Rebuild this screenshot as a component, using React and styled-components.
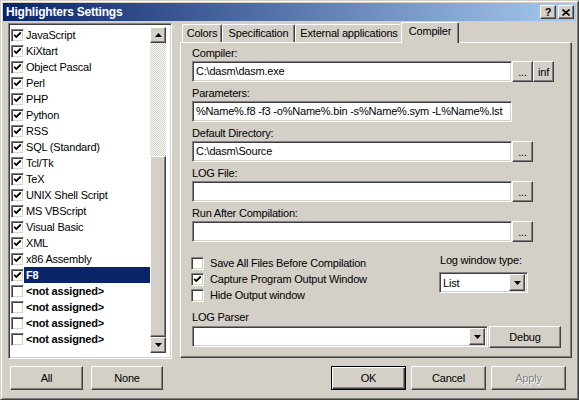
import React from 'react';
import styled, { createGlobalStyle, css } from 'styled-components';

const GlobalStyle = createGlobalStyle`
  body {
    margin: 0;
    background: #d4d0c8;
    font-family: "Liberation Sans", Arial, sans-serif;
    font-size: 11px;
    letter-spacing: -0.2px;
    color: #000;
  }
  * { box-sizing: border-box; }
`;

const raised = css`
  background: #d4d0c8;
  border: 1px solid;
  border-color: #fff #404040 #404040 #fff;
  box-shadow: inset -1px -1px #808080;
`;

const sunken = css`
  background: #fff;
  border: 1px solid;
  border-color: #808080 #fff #fff #808080;
  box-shadow: inset 1px 1px #404040, inset -1px -1px #d4d0c8;
`;

const Window = styled.div`
  width: 579px;
  height: 400px;
  padding: 2px;
  background: #d4d0c8;
  border: 1px solid;
  border-color: #d4d0c8 #404040 #404040 #d4d0c8;
  box-shadow: inset 1px 1px #fff, inset -1px -1px #808080;
  display: flex;
  flex-direction: column;
`;

const TitleBar = styled.div`
  height: 18px;
  display: flex;
  align-items: center;
  justify-content: space-between;
  padding: 0 2px 0 2px;
  background: linear-gradient(90deg, #0a246a, #a6caf0);
`;

const Title = styled.span`
  color: #fff;
  font-weight: bold;
  font-size: 12px;
  padding-left: 1px;
`;

const TitleButtons = styled.div`
  display: flex;
  gap: 2px;
`;

const TitleButton = styled.div`
  ${raised};
  width: 16px;
  height: 14px;
  display: flex;
  align-items: center;
  justify-content: center;
  font-weight: bold;
  font-size: 11px;
  line-height: 12px;
`;

const Body = styled.div`
  display: flex;
  margin-top: 1px;
  padding-left: 5px;
`;

const LeftPane = styled.div`
  width: 164px;
  margin-top: 1px;
  display: flex;
  flex-direction: column;
`;

const ListBox = styled.div`
  ${sunken};
  height: 336px;
  padding: 3px 5px 5px 1px;
  display: flex;
`;

const Items = styled.div`
  flex: 1;
  display: flex;
  flex-direction: column;
`;

const Item = styled.div`
  height: 16px;
  display: flex;
  align-items: center;
  padding-left: 1px;
`;

const Box = styled.span`
  ${sunken};
  width: 13px;
  height: 13px;
  flex: none;
  display: flex;
  align-items: center;
  justify-content: center;
`;

const ItemLabel = styled.span`
  flex: 1;
  height: 16px;
  line-height: 16px;
  padding-left: 2px;
  white-space: nowrap;
  font-weight: ${p => (p.$bold ? 'bold' : 'normal')};
  background: ${p => (p.$selected ? '#0a246a' : 'transparent')};
  color: ${p => (p.$selected ? '#fff' : '#000')};
`;

const ScrollBar = styled.div`
  width: 16px;
  display: flex;
  flex-direction: column;
`;

const ScrollButton = styled.div`
  ${raised};
  height: 16px;
  display: flex;
  align-items: center;
  justify-content: center;
`;

const Track = styled.div`
  flex: 1;
  display: flex;
  flex-direction: column;
  justify-content: flex-end;
  background-color: #fff;
  background-image: repeating-conic-gradient(#d4d0c8 0 25%, #fff 0 50%);
  background-size: 2px 2px;
`;

const Thumb = styled.div`
  ${raised};
  height: 181px;
`;

const ListButtons = styled.div`
  display: flex;
  gap: 8px;
  margin-top: 7px;
  padding-left: 2px;
`;

const Button = styled.div`
  ${raised};
  width: ${p => p.$w || 75}px;
  height: ${p => p.$h || 24}px;
  display: flex;
  align-items: center;
  justify-content: center;
  color: ${p => (p.$disabled ? '#808080' : '#000')};
  text-shadow: ${p => (p.$disabled ? '1px 1px #fff' : 'none')};
  ${p =>
    p.$default &&
    css`
      border: 1px solid #000;
      box-shadow: inset 1px 1px #fff, inset -1px -1px #404040, inset -2px -2px #808080;
    `}
`;

const RightPane = styled.div`
  width: 392px;
  margin-left: 8px;
  display: flex;
  flex-direction: column;
`;

const TabRow = styled.div`
  height: 20px;
  display: flex;
  align-items: flex-end;
  padding-left: 2px;
`;

const Tab = styled.div`
  position: relative;
  width: ${p => p.$w}px;
  height: 18px;
  display: flex;
  justify-content: center;
  padding-top: 2px;
  background: #d4d0c8;
  border-top: 1px solid #fff;
  border-left: 1px solid #fff;
  border-right: 1px solid #404040;
  border-radius: 2px 2px 0 0;
  box-shadow: inset -1px 0 #808080;
  ${p =>
    p.$active &&
    css`
      z-index: 1;
      height: 21px;
      width: ${p.$w + 4}px;
      margin: 0 -2px -1px;
      padding-top: 2px;
    `}
`;

const Panel = styled.div`
  height: 316px;
  background: #d4d0c8;
  border: 1px solid;
  border-color: #fff #404040 #404040 #fff;
  box-shadow: inset -1px -1px #808080;
  padding: 3px 0 0 11px;
  display: flex;
  flex-direction: column;
`;

const FieldGroup = styled.div`
  margin-bottom: 4px;
`;

const Label = styled.div`
  height: ${p => p.$h || 15}px;
  line-height: 15px;
`;

const FieldRow = styled.div`
  display: flex;
  height: 21px;
`;

const Input = styled.div`
  ${sunken};
  width: ${p => p.$w || 320}px;
  height: 21px;
  line-height: 19px;
  padding: 0 3px;
  white-space: nowrap;
  overflow: hidden;
`;

const SmallButton = styled.div`
  ${raised};
  width: 21px;
  height: 21px;
  display: flex;
  align-items: center;
  justify-content: center;
`;

const Options = styled.div`
  display: flex;
  margin-top: 9px;
`;

const CheckColumn = styled.div`
  width: 247px;
  display: flex;
  flex-direction: column;
`;

const CheckRow = styled.div`
  height: 16px;
  display: flex;
  align-items: center;
  margin-left: -1px;
  gap: 6px;
`;

const LogType = styled.div`
  display: flex;
  flex-direction: column;
`;

const LogLabel = styled.div`
  height: 17px;
  line-height: 11px;
  padding-left: 1px;
`;

const Combo = styled.div`
  ${sunken};
  width: ${p => p.$w}px;
  height: 21px;
  display: flex;
  align-items: center;
  justify-content: space-between;
  padding: 2px 2px 2px 3px;
`;

const DropButton = styled.div`
  ${raised};
  width: 16px;
  height: 17px;
  display: flex;
  align-items: center;
  justify-content: center;
`;

const ParserLabel = styled.div`
  margin-top: 7px;
  height: 16px;
  line-height: 15px;
`;

const ParserRow = styled.div`
  display: flex;
  gap: 1px;
`;

const Footer = styled.div`
  display: flex;
  justify-content: flex-end;
  gap: 5px;
  margin-top: 8px;
  padding-right: 6px;
`;

const Check = () => (
  <svg width="9" height="9" viewBox="0 0 9 9">
    <polyline points="1.2,3.8 3.3,6 7.8,1.5" fill="none" stroke="#000" strokeWidth="1.8" />
  </svg>
);

const Arrow = ({ up }) => (
  <svg width="7" height="4" viewBox="0 0 7 4">
    <polygon points={up ? '3.5,0 7,4 0,4' : '0,0 7,0 3.5,4'} fill="#000" />
  </svg>
);

const CloseGlyph = () => (
  <svg width="8" height="7" viewBox="0 0 8 7">
    <path d="M0.5 0.5 L7.5 6.5 M7.5 0.5 L0.5 6.5" stroke="#000" strokeWidth="1.6" />
  </svg>
);

const languages = [
  'JavaScript', 'KiXtart', 'Object Pascal', 'Perl', 'PHP', 'Python', 'RSS',
  'SQL (Standard)', 'Tcl/Tk', 'TeX', 'UNIX Shell Script', 'MS VBScript',
  'Visual Basic', 'XML', 'x86 Assembly',
];

const items = [
  ...languages.map(name => ({ name, checked: true })),
  { name: 'F8', checked: true, bold: true, selected: true },
  ...Array.from({ length: 4 }, () => ({ name: '<not assigned>', bold: true })),
];

const tabs = [
  { name: 'Colors', w: 40 },
  { name: 'Specification', w: 73 },
  { name: 'External applications', w: 108 },
  { name: 'Compiler', w: 54, active: true },
];

const fields = [
  { label: 'Compiler:', value: 'C:\\dasm\\dasm.exe', buttons: ['...', 'inf'] },
  { label: 'Parameters:', value: '%Name%.f8 -f3 -o%Name%.bin -s%Name%.sym -L%Name%.lst', buttons: [] },
  { label: 'Default Directory:', value: 'C:\\dasm\\Source', buttons: ['...'] },
  { label: 'LOG File:', value: '', buttons: ['...'] },
  { label: 'Run After Compilation:', value: '', buttons: ['...'] },
];

const options = [
  { name: 'Save All Files Before Compilation' },
  { name: 'Capture Program Output Window', checked: true },
  { name: 'Hide Output window' },
];

export default function App() {
  return (
    <>
      <GlobalStyle />
      <Window>
        <TitleBar>
          <Title>Highlighters Settings</Title>
          <TitleButtons>
            <TitleButton>?</TitleButton>
            <TitleButton><CloseGlyph /></TitleButton>
          </TitleButtons>
        </TitleBar>
        <Body>
          <LeftPane>
            <ListBox>
              <Items>
                {items.map((it, i) => (
                  <Item key={i}>
                    <Box>{it.checked && <Check />}</Box>
                    <ItemLabel $bold={it.bold} $selected={it.selected}>{it.name}</ItemLabel>
                  </Item>
                ))}
              </Items>
              <ScrollBar>
                <ScrollButton><Arrow up /></ScrollButton>
                <Track><Thumb /></Track>
                <ScrollButton><Arrow /></ScrollButton>
              </ScrollBar>
            </ListBox>
            <ListButtons>
              <Button $w={73}>All</Button>
              <Button $w={72}>None</Button>
            </ListButtons>
          </LeftPane>
          <RightPane>
            <TabRow>
              {tabs.map(t => (
                <Tab key={t.name} $w={t.w} $active={t.active}>{t.name}</Tab>
              ))}
            </TabRow>
            <Panel>
              {fields.map(f => (
                <FieldGroup key={f.label}>
                  <Label>{f.label}</Label>
                  <FieldRow>
                    <Input>{f.value}</Input>
                    {f.buttons.map(b => (
                      <SmallButton key={b}>{b}</SmallButton>
                    ))}
                  </FieldRow>
                </FieldGroup>
              ))}
              <Options>
                <CheckColumn>
                  {options.map(o => (
                    <CheckRow key={o.name}>
                      <Box>{o.checked && <Check />}</Box>
                      <span>{o.name}</span>
                    </CheckRow>
                  ))}
                </CheckColumn>
                <LogType>
                  <LogLabel>Log window type:</LogLabel>
                  <Combo $w={89}>
                    <span>List</span>
                    <DropButton><Arrow /></DropButton>
                  </Combo>
                </LogType>
              </Options>
              <ParserLabel>LOG Parser</ParserLabel>
              <ParserRow>
                <Combo $w={296}>
                  <span />
                  <DropButton><Arrow /></DropButton>
                </Combo>
                <Button $w={72} $h={22}>Debug</Button>
              </ParserRow>
            </Panel>
            <Footer>
              <Button $default>OK</Button>
              <Button>Cancel</Button>
              <Button $disabled>Apply</Button>
            </Footer>
          </RightPane>
        </Body>
      </Window>
    </>
  );
}
